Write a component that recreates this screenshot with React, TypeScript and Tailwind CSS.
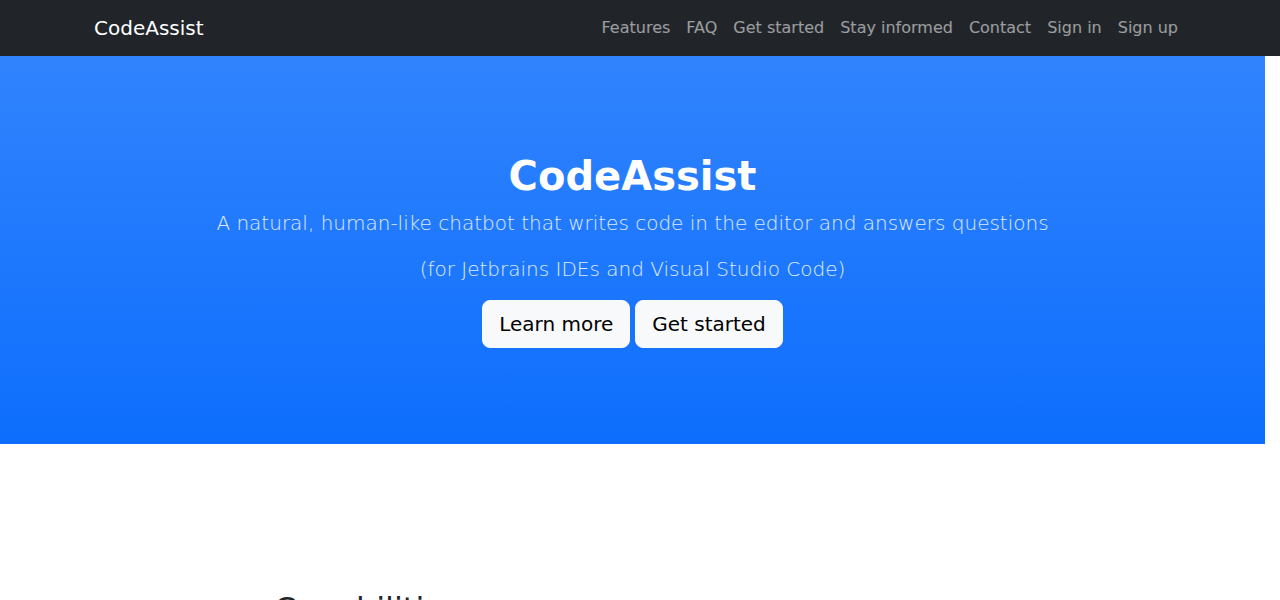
const navLinks = ['Features', 'FAQ', 'Get started', 'Stay informed', 'Contact', 'Sign in', 'Sign up'];

export default function App() {
  return (
    <div className="min-h-screen bg-white font-['DejaVu_Sans',sans-serif] text-[#212529]">
      {/* navbar */}
      <nav className="h-14 bg-[#212529] flex items-center justify-between px-[94px]">
        <a href="#" className="text-xl text-white leading-[30px]">CodeAssist</a>
        <ul className="flex items-center">
          {navLinks.map(l => (
            <li key={l}>
              <a href="#" className="block px-2 py-2 text-base leading-6 text-white/55">{l}</a>
            </li>
          ))}
        </ul>
      </nav>

      {/* hero */}
      <header className="w-[1265px] bg-[#0d6efd] bg-[linear-gradient(180deg,rgba(255,255,255,0.15),rgba(255,255,255,0))] py-24 text-center">
        <h1 className="text-[40px] leading-[48px] font-bold text-white mb-2">CodeAssist</h1>
        <p className="text-xl leading-[30px] font-light text-white/85 mb-4">A natural, human-like chatbot that writes code in the editor and answers questions</p>
        <p className="text-xl leading-[30px] font-light text-white/85 mb-4">(for Jetbrains IDEs and Visual Studio Code)</p>
        <div className="flex justify-center gap-[5px]">
          <button type="button" className="h-12 px-4 rounded-lg bg-[#f8f9fa] border border-[#f8f9fa] text-black text-xl leading-[30px]">Learn more</button>
          <button type="button" className="h-12 px-4 rounded-lg bg-[#f8f9fa] border border-[#f8f9fa] text-black text-xl leading-[30px]">Get started</button>
        </div>
      </header>

      {/* capabilities */}
      <section className="pt-[146px] pl-[274px]">
        <h2 className="text-[32px] leading-[38px] font-medium">Capabilities</h2>
      </section>
    </div>
  );
}
